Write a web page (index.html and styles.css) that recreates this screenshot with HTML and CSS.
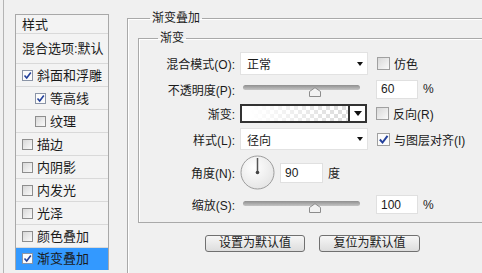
FILE: index.html
```html
<!DOCTYPE html>
<html>
<head>
	<title>图层样式 - 渐变叠加</title>
	<meta charset="utf-8">
	<link rel="stylesheet" href="styles.css">
</head>
<body>
	<div class="dialog">
		<div class="sidebar">
			<ul class="style-list">
				<li class="head">样式</li>
				<li class="blend">混合选项:默认</li>
				<li><span class="cb on"><svg viewBox="0 0 9 9"><path d="M1.5 4.5 L3.7 7 L7.8 1.5"/></svg></span>斜面和浮雕</li>
				<li class="sub"><span class="cb on"><svg viewBox="0 0 9 9"><path d="M1.5 4.5 L3.7 7 L7.8 1.5"/></svg></span>等高线</li>
				<li class="sub"><span class="cb"></span>纹理</li>
				<li><span class="cb"></span>描边</li>
				<li><span class="cb"></span>内阴影</li>
				<li><span class="cb"></span>内发光</li>
				<li><span class="cb"></span>光泽</li>
				<li><span class="cb"></span>颜色叠加</li>
				<li class="active"><span class="cb on"><svg viewBox="0 0 9 9"><path d="M1.5 4.5 L3.7 7 L7.8 1.5"/></svg></span>渐变叠加</li>
			</ul>
		</div>

		<div class="main">
			<fieldset class="group outer">
				<legend>渐变叠加</legend>
				<fieldset class="group inner">
					<legend>渐变</legend>

					<div class="row r1">
						<label>混合模式(O):</label>
						<div class="select"><span>正常</span><i class="arrow"></i></div>
						<span class="check"><span class="cb big"></span>仿色</span>
					</div>

					<div class="row r2">
						<label>不透明度(P):</label>
						<div class="slider">
							<div class="track"></div>
							<svg class="thumb" viewBox="0 0 12 10"><path d="M0.5 9.5 V4.5 L6 0.7 L11.5 4.5 V9.5 Z"/></svg>
						</div>
						<input class="num" type="text" value="60">
						<span class="unit">%</span>
					</div>

					<div class="row r3">
						<label>渐变:</label>
						<div class="grad">
							<div class="grad-fill"></div>
							<div class="grad-btn"><i class="arrow big"></i></div>
						</div>
						<span class="check"><span class="cb big"></span>反向(R)</span>
					</div>

					<div class="row r4">
						<label>样式(L):</label>
						<div class="select"><span>径向</span><i class="arrow"></i></div>
						<span class="check"><span class="cb big on"><svg viewBox="0 0 9 9"><path d="M1.5 4.5 L3.7 7 L7.8 1.5"/></svg></span>与图层对齐(I)</span>
					</div>

					<div class="row r5">
						<label>角度(N):</label>
						<svg class="dial" viewBox="0 0 35 35">
							<defs>
								<radialGradient id="dialfill" cx="0.4" cy="0.35" r="0.7">
									<stop offset="0" stop-color="#ffffff"/>
									<stop offset="1" stop-color="#e4e4e4"/>
								</radialGradient>
							</defs>
							<circle cx="17.5" cy="17.5" r="16.5" fill="url(#dialfill)" stroke="#9c9c9c"/>
							<line x1="17.5" y1="17.5" x2="17.5" y2="3" stroke="#555" stroke-width="1.5"/>
							<circle cx="17.5" cy="17.5" r="1.8" fill="#444"/>
						</svg>
						<input class="num angle" type="text" value="90">
						<span class="unit">度</span>
					</div>

					<div class="row r6">
						<label>缩放(S):</label>
						<div class="slider">
							<div class="track"></div>
							<svg class="thumb" viewBox="0 0 12 10"><path d="M0.5 9.5 V4.5 L6 0.7 L11.5 4.5 V9.5 Z"/></svg>
						</div>
						<input class="num" type="text" value="100">
						<span class="unit">%</span>
					</div>
				</fieldset>

				<div class="actions">
					<button>设置为默认值</button>
					<button class="reset">复位为默认值</button>
				</div>
			</fieldset>
		</div>
	</div>
</body>
</html>
```

FILE: styles.css
```css
*, *:before, *:after {
	box-sizing: border-box;
}

html, body {
	margin: 0;
}

body {
	width: 482px;
	height: 273px;
	overflow: hidden;
	background: #f0f0f0;
	font-family: "Liberation Sans", "Noto Sans CJK SC", sans-serif;
	font-size: 12px;
	color: #1b1b1b;
}

.dialog {
	display: flex;
	height: 273px;
}

/* left list of layer styles */
.sidebar {
	flex: none;
	width: 106px;
	margin-left: 3px;
	border-left: 1px solid #b4b4b4;
	padding: 14px 0 0 11px;
}

.style-list {
	list-style: none;
	margin: 0;
	padding: 0;
	width: 94px;
	border: 1px solid #a8a8a8;
	border-bottom: none;
	background: #f3f3f3;
	font-size: 13px;
}

.style-list li {
	display: flex;
	align-items: center;
	height: 23px;
	padding-left: 6px;
	border-bottom: 1px solid #d9d9d9;
	line-height: 1;
	white-space: nowrap;
}

.style-list li.head {
	height: 19px;
}

.style-list li.blend {
	height: 30px;
}

.style-list li.sub {
	padding-left: 19px;
}

.style-list li.active {
	height: 22px;
	background: #3399ff;
	border-bottom-color: #3399ff;
}

.cb {
	flex: none;
	display: inline-flex;
	width: 11px;
	height: 11px;
	margin-right: 4px;
	border: 1px solid #8e8e8e;
	background: linear-gradient(135deg, #d8d8d8, #fafafa);
}

.cb.on {
	background: #fbfbfb;
	border-color: #8a94a6;
}

.cb svg {
	width: 9px;
	height: 9px;
}

.cb svg path {
	fill: none;
	stroke: #23409b;
	stroke-width: 1.6;
}

.cb.big {
	width: 13px;
	height: 13px;
	margin-right: 4px;
	border-color: #a0a0a0;
}

.cb.big svg {
	width: 11px;
	height: 11px;
}

/* group boxes, open to the right and bottom edges */
.main {
	flex: 1;
	min-width: 0;
	margin-left: 18px;
}

.group {
	margin: 0;
	border: 1px solid #a9a9a9;
	border-right: none;
	box-shadow: inset 1px 1px 0 #fff;
}

.group legend {
	padding: 0 2px;
	line-height: 16px;
	font-size: 12px;
}

.outer {
	margin-top: 10px;
	height: 263px;
	padding: 0 0 0 10px;
	border-bottom: none;
}

.outer > legend {
	margin-left: 12px;
}

.inner {
	margin-top: 4px;
	padding: 6px 0 8px 0;
}

.inner > legend {
	margin-left: 19px;
}

/* form rows */
.row {
	display: flex;
	align-items: center;
	margin-bottom: 4px;
	white-space: nowrap;
}

.row:last-child {
	margin-bottom: 0;
}

.r1 { height: 23px; }
.r2 { height: 20px; }
.r3 { height: 21px; }
.r4 { height: 22px; }
.r5 { height: 37px; }
.r6 { height: 19px; }

.row label {
	flex: none;
	width: 98px;
	padding-right: 2px;
	text-align: right;
}

.select,
.slider,
.grad,
.dial {
	flex: none;
	margin-left: 3px;
}

.select {
	display: flex;
	align-items: center;
	width: 128px;
	height: 100%;
	padding-left: 6px;
	background: #fff;
	border: 1px solid #e2e2e2;
}

.arrow {
	margin-left: auto;
	margin-right: 4px;
	border-left: 3.5px solid transparent;
	border-right: 3.5px solid transparent;
	border-top: 4px solid #111;
}

.arrow.big {
	margin: 0;
	border-left-width: 4.5px;
	border-right-width: 4.5px;
	border-top-width: 5px;
}

.check {
	display: flex;
	align-items: center;
	margin-left: 9px;
}

.slider {
	position: relative;
	width: 128px;
	height: 20px;
}

.track {
	margin: 6px 0 0 3px;
	width: 117px;
	height: 5px;
	border-radius: 3px;
	background: linear-gradient(#8f8f8f, #c4c4c4);
}

.thumb {
	position: absolute;
	left: 69px;
	top: 8px;
	width: 12px;
	height: 10px;
}

.thumb path {
	fill: #f2f2f2;
	stroke: #8c8c8c;
}

.num {
	flex: none;
	width: 42px;
	height: 19px;
	margin: 0 0 0 8px;
	padding: 0 0 0 4px;
	border: 1px solid #e0e0e0;
	background: #fff;
	font: inherit;
	color: #1b1b1b;
	outline: 0;
}

.num.angle {
	width: 43px;
	height: 20px;
	margin-left: 5px;
}

.unit {
	margin-left: 5px;
}

.grad {
	display: flex;
	width: 127px;
	height: 19px;
	border: 2px solid #333;
}

.grad-fill {
	flex: 1;
	background:
		linear-gradient(to right, #fff 8%, rgba(255,255,255,0) 92%),
		linear-gradient(45deg, #dedede 25%, transparent 25%, transparent 75%, #dedede 75%),
		linear-gradient(45deg, #dedede 25%, #fff 25%, #fff 75%, #dedede 75%);
	background-size: 100% 100%, 8px 8px, 8px 8px;
	background-position: 0 0, 0 0, 4px 4px;
}

.grad-btn {
	display: flex;
	align-items: center;
	justify-content: center;
	width: 17px;
	border-left: 2px solid #333;
	background: #fff;
}

.dial {
	width: 35px;
	height: 35px;
}

/* buttons */
.actions {
	display: flex;
	gap: 14px;
	margin: 12px 0 0 67px;
}

.actions button {
	width: 100px;
	height: 17px;
	padding: 0;
	border: 1px solid #707070;
	border-radius: 3px;
	background: linear-gradient(#f6f6f6, #dddddd);
	font: inherit;
	font-size: 12px;
	line-height: 15px;
	color: #1b1b1b;
}

.actions button.reset {
	width: 101px;
}
```
